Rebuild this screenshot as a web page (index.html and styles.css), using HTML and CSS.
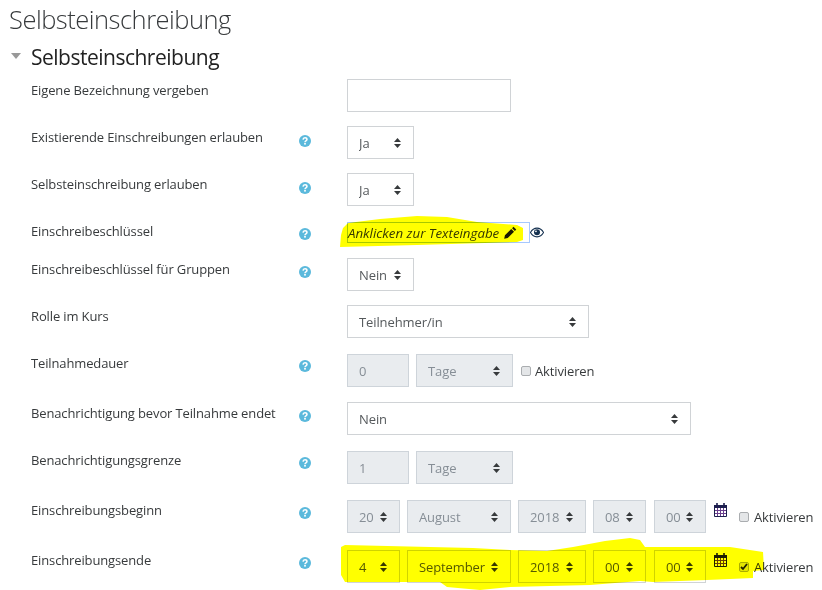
FILE: index.html
```html
<!DOCTYPE html>
<html lang="de">
<head>
    <meta charset="UTF-8">
    <meta name="viewport" content="width=device-width, initial-scale=1.0">
    <title>Selbsteinschreibung</title>
    <link rel="stylesheet" href="styles.css">
</head>
<body>
    <svg class="icon-defs" width="0" height="0" aria-hidden="true">
        <symbol id="help" viewBox="0 0 14 14">
            <circle cx="7" cy="7" r="7" fill="#5bb9dc"/>
            <path d="M4.700 5.400C4.800 4.100 5.800 3.300 7 3.300c1.300 0 2.300.8 2.300 2 0 1.600-2.300 1.600-2.300 3.100" fill="none" stroke="#fff" stroke-width="1.800"/>
            <rect x="6" y="9.300" width="2" height="1.900" fill="#fff"/>
        </symbol>
        <symbol id="calendar" viewBox="0 0 13 14">
            <path d="M.5 2.500h12v11H.5z" fill="#fff" stroke="#1d1f4f"/>
            <path d="M0 2h13v3H0z" fill="#1d1f4f"/>
            <path d="M3.500 5v8M6.500 5v8M9.500 5v8M1 7.500h11M1 10.500h11" stroke="#6a3f8e"/>
            <path d="M3 0v3M10 0v3" stroke="#1d1f4f" stroke-width="1.600"/>
        </symbol>
    </svg>

    <h2 class="page-title">Selbsteinschreibung</h2>
    <h3 class="section-title"><span class="caret"></span>Selbsteinschreibung</h3>

    <form class="form">
        <div class="row">
            <label class="label">Eigene Bezeichnung vergeben</label>
            <span class="help"></span>
            <input class="text-input" type="text">
        </div>
        <div class="row">
            <label class="label">Existierende Einschreibungen erlauben</label>
            <span class="help"><svg><use href="#help"/></svg></span>
            <select class="select w-67"><option>Ja</option></select>
        </div>
        <div class="row">
            <label class="label">Selbsteinschreibung erlauben</label>
            <span class="help"><svg><use href="#help"/></svg></span>
            <select class="select w-67"><option>Ja</option></select>
        </div>
        <div class="row row-key">
            <label class="label">Einschreibeschlüssel</label>
            <span class="help"><svg><use href="#help"/></svg></span>
            <div class="key-edit">
                <a class="key-link"><span>Anklicken zur Texteingabe</span><svg class="pencil" viewBox="0 0 14 14"><path d="M10.200.8l3 3-1.500 1.500-3-3zM7.800 3.200l3 3-6.800 6.800-3.800.8.800-3.800z" fill="#1b1b1b"/></svg></a>
                <svg class="eye" viewBox="0 0 16 12"><path d="M.5 6C2.300 2.800 5 1 8 1s5.700 1.800 7.500 5C13.700 9.200 11 11 8 11S2.300 9.200.5 6z" fill="#fff" stroke="#14304f" stroke-width="1.200"/><circle cx="8" cy="5.800" r="3.400" fill="#14304f"/><circle cx="6.800" cy="4.600" r="1" fill="#fff"/></svg>
            </div>
        </div>
        <div class="row">
            <label class="label">Einschreibeschlüssel für Gruppen</label>
            <span class="help"><svg><use href="#help"/></svg></span>
            <select class="select w-67"><option>Nein</option></select>
        </div>
        <div class="row">
            <label class="label">Rolle im Kurs</label>
            <span class="help"></span>
            <select class="select w-242"><option>Teilnehmer/in</option></select>
        </div>
        <div class="row row-low">
            <label class="label">Teilnahmedauer</label>
            <span class="help"><svg><use href="#help"/></svg></span>
            <div class="controls">
                <input class="text-input w-62" type="text" value="0" disabled>
                <select class="select w-97" disabled><option>Tage</option></select>
                <label class="check"><input type="checkbox">Aktivieren</label>
            </div>
        </div>
        <div class="row">
            <label class="label">Benachrichtigung bevor Teilnahme endet</label>
            <span class="help"><svg><use href="#help"/></svg></span>
            <select class="select w-344"><option>Nein</option></select>
        </div>
        <div class="row row-low">
            <label class="label">Benachrichtigungsgrenze</label>
            <span class="help"><svg><use href="#help"/></svg></span>
            <div class="controls">
                <input class="text-input w-62" type="text" value="1" disabled>
                <select class="select w-97" disabled><option>Tage</option></select>
            </div>
        </div>
        <div class="row row-date">
            <label class="label">Einschreibungsbeginn</label>
            <span class="help"><svg><use href="#help"/></svg></span>
            <div class="controls date">
                <select class="select w-53" disabled><option>20</option></select>
                <select class="select w-104" disabled><option>August</option></select>
                <select class="select w-68" disabled><option>2018</option></select>
                <select class="select w-53" disabled><option>08</option></select>
                <select class="select w-52" disabled><option>00</option></select>
                <svg class="calendar"><use href="#calendar"/></svg>
                <label class="check"><input type="checkbox">Aktivieren</label>
            </div>
        </div>
        <div class="row row-date">
            <label class="label">Einschreibungsende</label>
            <span class="help"><svg><use href="#help"/></svg></span>
            <div class="controls date">
                <select class="select w-53"><option>4</option></select>
                <select class="select w-104"><option>September</option></select>
                <select class="select w-68"><option>2018</option></select>
                <select class="select w-53"><option>00</option></select>
                <select class="select w-52"><option>00</option></select>
                <svg class="calendar"><use href="#calendar"/></svg>
                <label class="check"><input type="checkbox" checked>Aktivieren</label>
            </div>
        </div>
    </form>

    <!-- marker highlights drawn over the screenshot -->
    <svg class="marker" viewBox="0 0 822 590" width="822" height="590" aria-hidden="true">
        <path d="M343 228L348 223 380 219 417 216 447 217 477 222 517 225 523 228 523 240 517 242 417 245 340 247 341 235z"/>
        <path d="M341 547L345 545 473 548 510 550 547 551 573 547 605 541 630 538 640 540 645 547 672 547 730 547 763 552 764 570 753 571 753 578 707 580 653 582 640 581 590 585 510 587 480 590 447 587 440 582 345 582 341 575z"/>
    </svg>
</body>
</html>
```

FILE: styles.css
```css
* {
    margin: 0;
    padding: 0;
    box-sizing: border-box;
}
html, body {
    height: 590px;
    overflow: hidden;
}
body {
    position: relative;
    font-family: "Open Sans", Arial, sans-serif;
    font-size: 13px;
    letter-spacing: -.13px;
    line-height: 20px;
    color: #373a3c;
    background-color: #fff;
}
.icon-defs {
    position: absolute;
}
.page-title {
    padding: 2px 0 0 9px;
    height: 41px;
    font-size: 25.500px;
    letter-spacing: -.5px;
    line-height: 34px;
    font-weight: 300;
    color: #373a3c;
}
.section-title {
    display: flex;
    align-items: center;
    height: 31px;
    padding-top: 1px;
    font-size: 21px;
    letter-spacing: -.5px;
    line-height: 30px;
    font-weight: 400;
    color: #222;
}
.caret {
    width: 0;
    height: 0;
    margin: 0 10px 3px 11px;
    border-left: 5px solid transparent;
    border-right: 5px solid transparent;
    border-top: 6px solid #999;
}
.form {
    padding: 7px 0 0 31px;
}
.row {
    display: flex;
    align-items: flex-start;
    min-height: 33px;
    margin-bottom: 14px;
}
.row-key {
    min-height: 24px;
}
.row-low {
    padding-top: 2px;
    margin-bottom: 15px;
}
.row-date {
    padding-top: 1px;
    padding-bottom: 2px;
}
.label {
    flex: 0 0 268px;
    padding-top: 1px;
}
.row-low .label {
    margin-top: -2px;
}
.row-date .label {
    margin-top: -1px;
}
.help {
    flex: 0 0 48px;
    height: 12px;
    margin-top: 8px;
}
.row:nth-child(-n+3) .help {
    margin-top: 9px;
}
.row-low .help {
    margin-top: 6px;
}
.row-date .help {
    margin-top: 7px;
}
.help svg {
    display: block;
    width: 12px;
    height: 12px;
}
.controls {
    display: flex;
    align-items: flex-start;
}
.text-input,
.select {
    display: block;
    height: 33px;
    font-family: inherit;
    font-size: 13px;
    letter-spacing: -.1px;
    color: #55595c;
    background-color: #fff;
    border: 1px solid #d0d3d6;
    border-radius: 0;
    padding: 0 11px;
}
.text-input {
    width: 164px;
}
.text-input:disabled,
.select:disabled {
    color: #868e96;
    background-color: #e9ecef;
    border-color: #ced4da;
    opacity: 1;
}
.select {
    appearance: none;
    background-image: url("data:image/svg+xml,%3Csvg xmlns='http://www.w3.org/2000/svg' width='7' height='10'%3E%3Cpath d='M3.500 0L7 4H0zM3.500 10L0 6h7z' fill='%23373a3c'/%3E%3C/svg%3E");
    background-repeat: no-repeat;
    background-position: right 12px center;
}
.w-52 { width: 52px; }
.w-53 { width: 53px; }
.w-62 { width: 62px; }
.w-67 { width: 67px; }
.w-68 { width: 68px; }
.w-97 { width: 97px; }
.w-104 { width: 104px; }
.w-242 { width: 242px; }
.w-344 { width: 344px; }
.controls > * + * {
    margin-left: 7px;
}
.date > .w-52 {
    margin-left: 8px;
}
.key-edit {
    display: flex;
    align-items: center;
    margin-top: 2px;
}
.key-link {
    display: flex;
    align-items: center;
    width: 183px;
    height: 21px;
    font-size: 13.300px;
    font-style: italic;
    letter-spacing: 0;
    white-space: nowrap;
    color: #373a3c;
    border: 1px solid #a6c8ff;
}
.pencil {
    flex: none;
    width: 13px;
    height: 13px;
    margin-left: 5px;
}
.eye {
    width: 14px;
    height: 11px;
}
.calendar {
    width: 13px;
    height: 14px;
    margin-top: 3px;
}
.controls > .calendar {
    margin-left: 8px;
}
.check {
    display: flex;
    align-items: center;
    height: 33px;
}
.controls > .check {
    margin-left: 8px;
}
.date > .check {
    margin-left: 12px;
}
.check input {
    appearance: none;
    width: 10px;
    height: 10px;
    margin-right: 5px;
    background-color: #e4e6e8;
    border: 1px solid #aaadb0;
    border-radius: 2px;
}
.row-low .check input {
    margin-right: 4px;
}
.check input:checked {
    background-image: url("data:image/svg+xml,%3Csvg xmlns='http://www.w3.org/2000/svg' width='8' height='8'%3E%3Cpath d='M1 4l2 2 4-5' fill='none' stroke='%23222' stroke-width='1.800'/%3E%3C/svg%3E");
    background-position: center;
    background-repeat: no-repeat;
}
.marker {
    position: absolute;
    top: 0;
    left: 0;
    fill: #ffff00;
    mix-blend-mode: multiply;
    pointer-events: none;
}
```
